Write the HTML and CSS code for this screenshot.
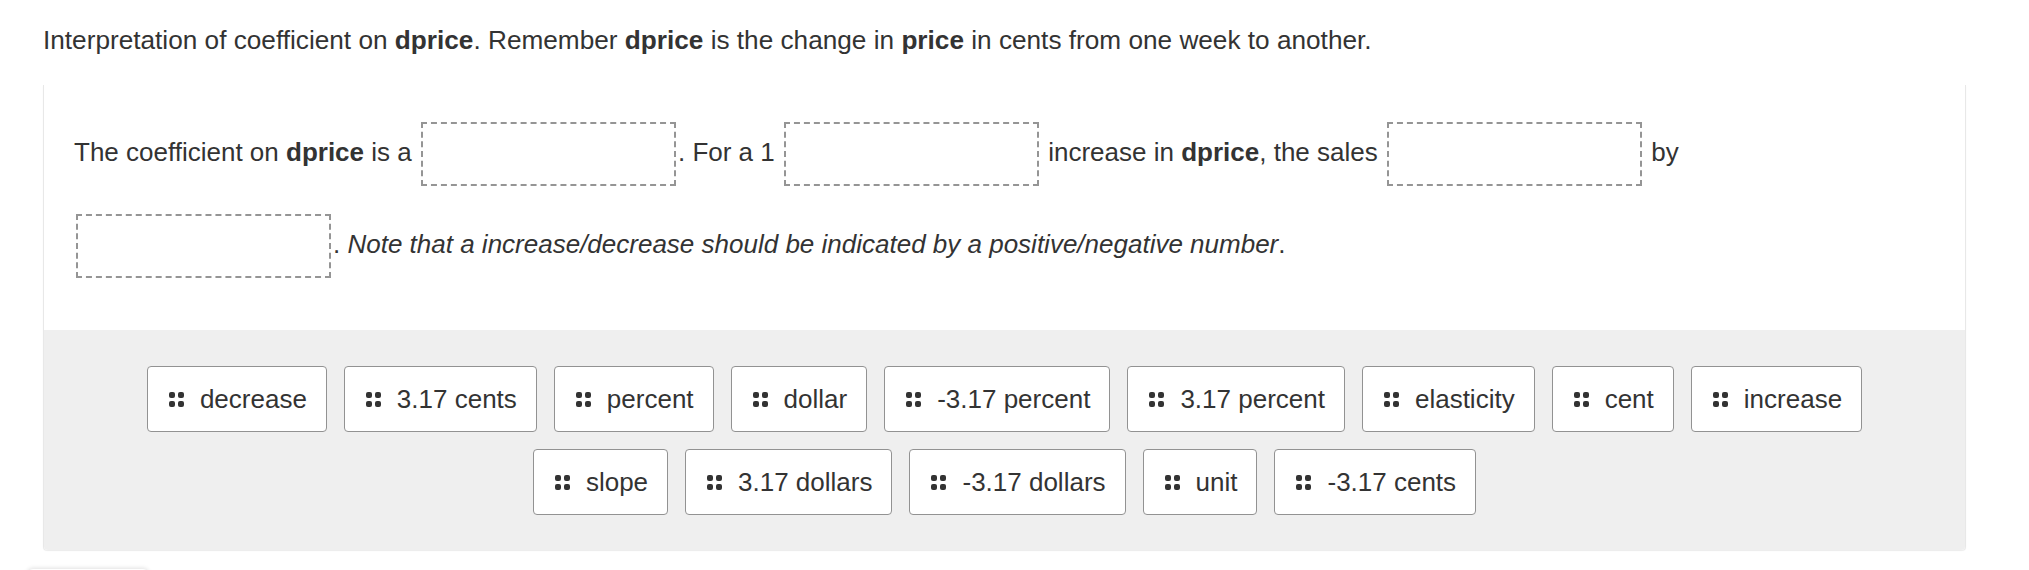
FILE: index.html
```html
<!DOCTYPE html>
<html lang="en">
<head>
<meta charset="utf-8">
<title>Interpretation of coefficient</title>
<link rel="stylesheet" href="styles.css">
</head>
<body>
<div class="page">
  <p class="prompt">Interpretation of coefficient on <b>dprice</b>. Remember <b>dprice</b> is the change in <b>price</b> in cents from one week to another.</p>
  <div class="question">
    <p class="stem">The coefficient on <b>dprice</b> is a <span class="blank"></span>. For a 1 <span class="blank"></span> increase in <b>dprice</b>, the sales <span class="blank"></span> by <span class="blank"></span>. <i>Note that a increase/decrease should be indicated by a positive/negative number</i>.</p>
    <div class="bank">
      <div class="chip"><span class="grip"><i></i><i></i><i></i><i></i></span>decrease</div>
      <div class="chip"><span class="grip"><i></i><i></i><i></i><i></i></span>3.17 cents</div>
      <div class="chip"><span class="grip"><i></i><i></i><i></i><i></i></span>percent</div>
      <div class="chip"><span class="grip"><i></i><i></i><i></i><i></i></span>dollar</div>
      <div class="chip"><span class="grip"><i></i><i></i><i></i><i></i></span>-3.17 percent</div>
      <div class="chip"><span class="grip"><i></i><i></i><i></i><i></i></span>3.17 percent</div>
      <div class="chip"><span class="grip"><i></i><i></i><i></i><i></i></span>elasticity</div>
      <div class="chip"><span class="grip"><i></i><i></i><i></i><i></i></span>cent</div>
      <div class="chip"><span class="grip"><i></i><i></i><i></i><i></i></span>increase</div>
      <div class="chip"><span class="grip"><i></i><i></i><i></i><i></i></span>slope</div>
      <div class="chip"><span class="grip"><i></i><i></i><i></i><i></i></span>3.17 dollars</div>
      <div class="chip"><span class="grip"><i></i><i></i><i></i><i></i></span>-3.17 dollars</div>
      <div class="chip"><span class="grip"><i></i><i></i><i></i><i></i></span>unit</div>
      <div class="chip"><span class="grip"><i></i><i></i><i></i><i></i></span>-3.17 cents</div>
    </div>
  </div>
  <div class="next-btn"></div>
</div>
</body>
</html>
```

FILE: styles.css
```css
html, body {
  margin: 0;
  padding: 0;
  background: #fff;
}

body {
  font-family: "Liberation Sans", Arial, sans-serif;
  color: #333;
  overflow: hidden;
}

.page {
  padding: 25px 63px 0 43px;
}

.prompt {
  margin: 0;
  font-size: 26.2px;
  line-height: 31px;
}

.question {
  margin-top: 29px;
  border-left: 1px solid #e8e8e8;
  border-right: 1px solid #e8e8e8;
  border-radius: 0 0 4px 4px;
  box-shadow: 0 1px 1px rgba(0, 0, 0, 0.08);
  background: #fff;
}

.stem {
  margin: 0;
  padding: 21px 60px 40px 30px;
  font-size: 26px;
  line-height: 92px;
}

.blank {
  display: inline-block;
  box-sizing: border-box;
  width: 255px;
  height: 64px;
  margin: 0 2px;
  border: 2px dashed #959595;
  vertical-align: middle;
}

.bank {
  display: flex;
  flex-wrap: wrap;
  justify-content: center;
  gap: 17px 17px;
  padding: 36px 60px 35px;
  background: #efefef;
  border-radius: 0 0 4px 4px;
}

.chip {
  display: flex;
  align-items: center;
  gap: 16px;
  box-sizing: border-box;
  height: 66px;
  padding: 0 19px 0 21px;
  background: #fff;
  border: 1px solid #929292;
  border-radius: 4px;
  font-size: 26px;
  white-space: nowrap;
}

.grip {
  display: grid;
  grid-template-columns: 6px 6px;
  grid-template-rows: 6px 6px;
  gap: 3px;
  width: 15px;
}

.grip i {
  display: block;
  background: #333;
  border-radius: 2px;
}

.next-btn {
  width: 122px;
  height: 20px;
  margin: 19px 0 0 -16px;
  border-radius: 6px;
  background: #fff;
  box-shadow: 0 -1px 4px rgba(0, 0, 0, 0.12);
}
```
